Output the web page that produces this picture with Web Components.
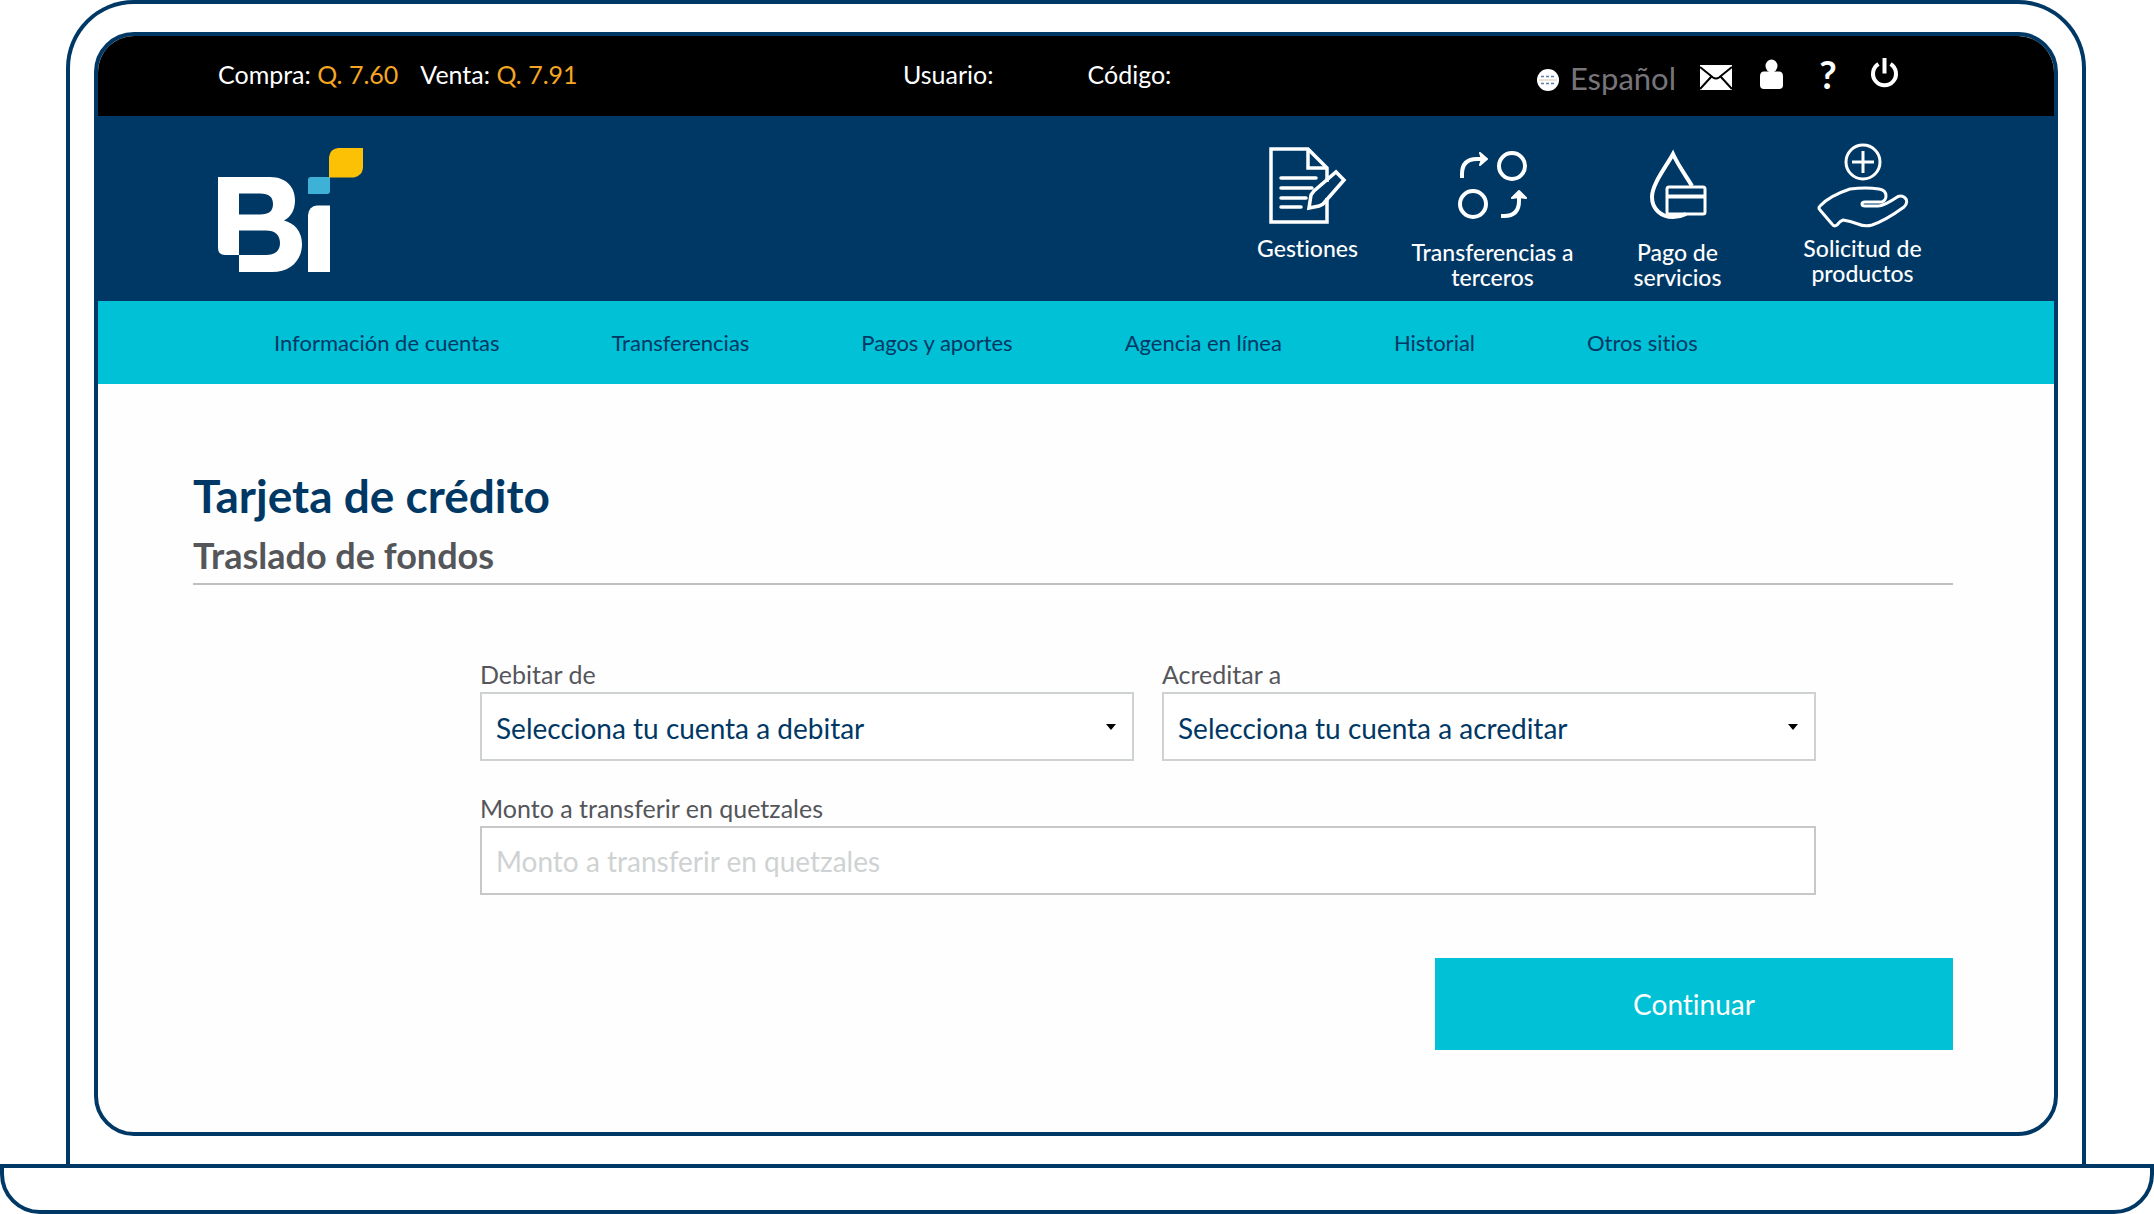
<!DOCTYPE html>
<html lang="es">
<head>
<meta charset="utf-8">
<meta name="viewport" content="width=device-width, initial-scale=1">
<title>Tarjeta de crédito – Traslado de fondos</title>
<style>
  :root {
    --navy: #003865;
    --cyan: #00c1d5;
    --amber: #f5a623;
  }
  body {
    margin: 0;
    background: #fff;
    color: #54565a;
    font-family: Lato, "Liberation Sans", sans-serif;
    font-variant-ligatures: none;
  }
</style>
</head>
<body>
<laptop-frame>
  <top-bar></top-bar>
  <brand-bar>
    <bi-logo slot="logo"></bi-logo>
    <short-cut icon="document">Gestiones</short-cut>
    <short-cut icon="transfer">Transferencias a terceros</short-cut>
    <short-cut icon="services">Pago de servicios</short-cut>
    <short-cut icon="hand">Solicitud de productos</short-cut>
  </brand-bar>
  <main-nav></main-nav>
  <transfer-page></transfer-page>
</laptop-frame>

<script>
function define(name, html, setup) {
  const template = document.createElement('template');
  template.innerHTML = html;
  customElements.define(name, class extends HTMLElement {
    constructor() {
      super();
      this.attachShadow({ mode: 'open' }).append(template.content.cloneNode(true));
    }
    connectedCallback() {
      if (setup) setup(this, this.shadowRoot);
    }
  });
}

define('laptop-frame', `
<style>
  :host { display: block; }
  .lid {
    margin: 0 68px 0 66px;
    padding: 28px 24px;
    border: 4px solid var(--navy);
    border-bottom: 0;
    border-radius: 68px 68px 0 0;
  }
  .screen {
    border: 4px solid var(--navy);
    border-radius: 40px;
    overflow: hidden;
    background: #fefefe;
  }
  .base {
    box-sizing: border-box;
    height: 50px;
    border: 4px solid var(--navy);
    border-radius: 0 0 40px 40px;
  }
</style>
<div class="lid"><div class="screen"><slot></slot></div></div>
<div class="base"></div>`);

define('top-bar', `
<style>
  :host { display: block; background: #000; color: #fff; }
  .bar {
    display: grid;
    grid-template-columns: 685fr 632fr 365fr;
    align-items: center;
    height: 76px;
    padding: 0 154px 4px 120px;
    font-size: 25px;
    font-weight: 400;
  }
  .rates, .user, .tools { display: flex; align-items: center; white-space: nowrap; }
  .rates { gap: 22px; }
  .user { gap: 94px; }
  .tools { gap: 24px; justify-content: flex-end; }
  .amount { color: var(--amber); }
  button {
    display: flex;
    align-items: center;
    justify-content: center;
    width: 32px;
    height: 36px;
    margin: 0;
    padding: 0;
    border: 0;
    background: none;
    color: #fff;
    font: inherit;
    font-variant-ligatures: inherit;
    cursor: pointer;
  }
  svg { display: block; flex: none; }
  .lang {
    gap: 10px;
    width: auto;
    padding-top: 8px;
    color: #77757a;
    font-size: 31px;
  }
  .help { font-size: 38px; font-weight: 700; line-height: 36px; }
</style>
<div class="bar">
  <div class="rates">
    <span>Compra: <span class="amount">Q. 7.60</span></span>
    <span>Venta: <span class="amount">Q. 7.91</span></span>
  </div>
  <div class="user"><span>Usuario:</span><span>Código:</span></div>
  <div class="tools">
    <button class="lang" type="button">
      <svg width="24" height="26" viewBox="0 0 24 26" aria-hidden="true">
        <circle cx="12" cy="15" r="11" fill="#fff"/>
        <path d="M5 11.500h14M5 18.500h14" stroke="#5b7fae" stroke-width="1.500" stroke-dasharray="3 2"/>
        <path d="M3 15h18" stroke="#d8c9a8" stroke-width="1"/>
      </svg>Español
    </button>
    <button type="button" aria-label="Mensajes">
      <svg width="32" height="36" viewBox="0 0 32 36" aria-hidden="true">
        <path d="M0 9h32v25H0z" fill="#fff"/>
        <path d="M0 11l13 10.500q3 2 6 0L32 11M0 33l11-12M32 33L21 21" fill="none" stroke="#000" stroke-width="2"/>
      </svg>
    </button>
    <button type="button" aria-label="Perfil">
      <svg width="32" height="36" viewBox="0 0 32 36" aria-hidden="true" fill="#fff">
        <ellipse cx="15.500" cy="10" rx="6" ry="6.500"/>
        <path d="M8 15.500h15q4 0 4 5V29q0 4-4 4H8q-4 0-4-4v-8.500q0-5 4-5z"/>
      </svg>
    </button>
    <button class="help" type="button" aria-label="Ayuda">?</button>
    <button type="button" aria-label="Salir">
      <svg width="32" height="36" viewBox="0 0 32 36" aria-hidden="true" fill="none" stroke="#fff" stroke-width="4">
        <path d="M10.500 8a11.500 11.500 0 1 0 12 0M16.500 2v15.500"/>
      </svg>
    </button>
  </div>
</div>`);

define('brand-bar', `
<style>
  :host {
    display: flex;
    justify-content: space-between;
    align-items: flex-start;
    box-sizing: border-box;
    min-height: 185px;
    padding: 24px 99px 0 120px;
    background: var(--navy);
    color: #fff;
  }
  nav { display: flex; }
</style>
<slot name="logo"></slot>
<nav aria-label="Accesos"><slot></slot></nav>`);

define('bi-logo', `
<style>
  :host { display: block; }
  svg { display: block; }
</style>
<svg width="148" height="136" viewBox="0 0 148 136" role="img" aria-label="Bi">
  <path fill="#fff" fill-rule="evenodd" d="M0 37H52C69 37 77 48 77 60C77 70 73 77 66 80.500C76 83 84 91 84 104C84 120 73 132 54 132H21V115H7Q0 115 0 108ZM21 53.500V74.500H42C51 74.500 55 71 55 64C55 57 51 53.500 42 53.500ZM21 90.500V115H48C57 115 62 111 62 103C62 95 57 90.500 48 90.500Z"/>
  <path fill="#fff" d="M90 132V75Q91 66 99 65.500H112V132Z"/>
  <path fill="#3eb1d6" d="M93 37H112V51Q112 54 109 54H90V40Q90 37 93 37Z"/>
  <path fill="#fcc005" d="M120 8H145V28Q144 36 136 37.500H111V17Q112 9 120 8Z"/>
</svg>`);

const SHORTCUT_ICONS = {
  document: [96, `
    <g stroke-width="3.500"><path d="M65 42V28L46 9H9V82H65V58"/><path d="M46 9V28H65"/>
    <path d="M19 38H54M19 48H50M19 58H44M19 67H39" stroke-linecap="round"/>
    <path d="M47 68L49 55L52 51L74 32L82 40L61 64L57 66Z"/></g>`],
  transfer: [100, `
    <g stroke-width="4"><circle cx="65" cy="26" r="13"/><circle cx="26" cy="64" r="13"/>
    <path d="M15 38V34Q15 19 30 19H37M54 76H57Q72 76 72 61V56"/></g>
    <path fill="#fff" stroke-width="2" stroke-linejoin="round" d="M33 13L40 19L33 25L35 19ZM65 58L72 51L79 58L72 57Z"/>`],
  services: [100, `
    <path stroke-width="4" d="M60 46C54 36 46 25 41 14C34 27 20 44 20 57C20 69 29 77 41 77C46 77 50 76 54 74"/>
    <rect x="35" y="47" width="38" height="27" rx="2" stroke-width="3"/>
    <path d="M35 56.500H73" stroke-width="4"/>`],
  hand: [96, `
    <g stroke-width="3"><circle cx="46" cy="22" r="17"/><path d="M46 11V33M35 22H57"/>
    <path stroke-linejoin="round" d="M3 66Q12 56 33 49Q49 47 62 49Q69 50 69 56Q69 60 65 62H48Q45 62 45 64Q45 66 48 66H61Q67 66 81 56.500Q86 55 89 59Q91 63 87 67C76 75 64 82 55 85Q48 87 41 84Q33 81 26 80Q23 81 20 85Q17 87 15 84L3 70Q1 68 3 66Z"/></g>`]
};

define('short-cut', `
<style>
  :host { display: block; }
  a {
    display: flex;
    flex-direction: column;
    align-items: center;
    box-sizing: border-box;
    width: 185px;
    padding: 0 10px;
    color: #fff;
    font-size: 23px;
    font-weight: 500;
    line-height: 25px;
    text-align: center;
    text-decoration: none;
  }
  svg { display: block; fill: none; stroke: #fff; }
</style>
<a href="#"><svg width="92" aria-hidden="true"></svg><slot></slot></a>`, (host, root) => {
  const [height, shapes] = SHORTCUT_ICONS[host.getAttribute('icon')];
  const svg = root.querySelector('svg');
  svg.setAttribute('height', height);
  svg.setAttribute('viewBox', '0 0 92 ' + height);
  svg.innerHTML = shapes;
});

define('main-nav', `
<style>
  :host { display: block; background: var(--cyan); }
  nav {
    display: flex;
    gap: 112px;
    align-items: center;
    height: 83px;
    padding-left: 176px;
  }
  a {
    color: var(--navy);
    font-size: 22px;
    white-space: nowrap;
    text-decoration: none;
  }
</style>
<nav aria-label="Principal">
  <a href="#">Información de cuentas</a>
  <a href="#">Transferencias</a>
  <a href="#">Pagos y aportes</a>
  <a href="#">Agencia en línea</a>
  <a href="#">Historial</a>
  <a href="#">Otros sitios</a>
</nav>`);

define('select-field', `
<style>
  :host { display: block; flex: 1; }
  label { display: block; margin-bottom: 4px; font-size: 25px; line-height: 28px; }
  .box { display: grid; align-items: center; }
  .box > * { grid-area: 1 / 1; }
  select {
    appearance: none;
    box-sizing: border-box;
    width: 100%;
    height: 69px;
    margin: 0;
    padding: 2px 40px 0 14px;
    border: 2px solid #cfd2d2;
    border-radius: 0;
    background: #fff;
    color: var(--navy);
    font: inherit;
    font-size: 28px;
    font-variant-ligatures: inherit;
  }
  svg { justify-self: end; margin-right: 18px; pointer-events: none; }
</style>
<label for="control"></label>
<div class="box">
  <select id="control"><option></option></select>
  <svg width="10" height="6" viewBox="0 0 10 6" aria-hidden="true"><path d="M0 0H10L5 6Z"/></svg>
</div>`, (host, root) => {
  root.querySelector('label').textContent = host.getAttribute('label');
  root.querySelector('option').textContent = host.getAttribute('prompt');
});

define('text-field', `
<style>
  :host { display: block; flex: 1; }
  label { display: block; margin-bottom: 4px; font-size: 25px; line-height: 28px; }
  input {
    display: block;
    box-sizing: border-box;
    width: 100%;
    height: 69px;
    margin: 0;
    padding: 0 14px;
    border: 2px solid #c6c8c9;
    border-radius: 0;
    background: #fff;
    color: var(--navy);
    font: inherit;
    font-size: 28px;
    font-variant-ligatures: inherit;
  }
  input::placeholder { color: #cfd2d2; opacity: 1; }
</style>
<label for="control"></label>
<input id="control" type="text" inputmode="decimal">`, (host, root) => {
  root.querySelector('label').textContent = host.getAttribute('label');
  root.querySelector('input').placeholder = host.getAttribute('label');
});

define('transfer-page', `
<style>
  :host { display: block; padding: 82px 101px 82px 95px; }
  h1, h2 { margin: 0; }
  h1 { color: var(--navy); font-size: 46px; font-weight: 700; line-height: 60px; }
  h2 {
    margin-top: 5px;
    padding-bottom: 4px;
    border-bottom: 2px solid #bfbfbf;
    font-size: 36px;
    font-weight: 700;
    line-height: 48px;
  }
  .fields {
    display: flex;
    flex-direction: column;
    gap: 33px;
    margin: 75px 137px 0 287px;
  }
  .row { display: flex; gap: 28px; }
  .actions { display: flex; justify-content: flex-end; margin-top: 63px; }
  button {
    width: 518px;
    height: 92px;
    padding: 0;
    border: 0;
    background: var(--cyan);
    color: #fff;
    font: inherit;
    font-size: 28px;
    font-variant-ligatures: inherit;
    cursor: pointer;
  }
</style>
<h1>Tarjeta de crédito</h1>
<h2>Traslado de fondos</h2>
<form>
  <div class="fields">
    <div class="row">
      <select-field label="Debitar de" prompt="Selecciona tu cuenta a debitar"></select-field>
      <select-field label="Acreditar a" prompt="Selecciona tu cuenta a acreditar"></select-field>
    </div>
    <text-field label="Monto a transferir en quetzales"></text-field>
  </div>
  <div class="actions"><button type="button">Continuar</button></div>
</form>`);
</script>
</body>
</html>
